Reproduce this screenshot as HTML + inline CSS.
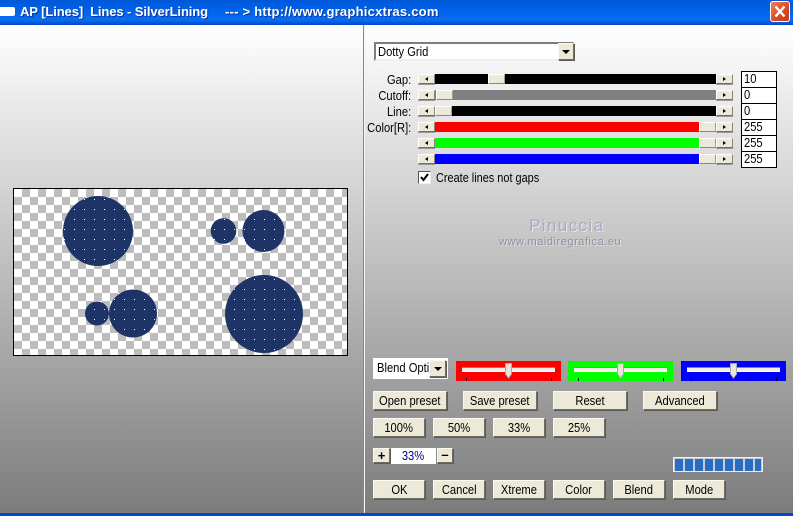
<!DOCTYPE html>
<html><head><meta charset="utf-8">
<style>
html,body{margin:0;padding:0}
body{width:793px;height:516px;overflow:hidden;position:relative;font-family:"Liberation Sans",sans-serif;font-size:13px;color:#000;background:#888}
div{position:absolute;box-sizing:border-box}
.t{display:inline-block;transform:scaleX(.86);white-space:nowrap}
.tl{display:inline-block;transform:scaleX(.86);transform-origin:left center;white-space:nowrap}
.tr2{display:inline-block;transform:scaleX(.86);transform-origin:right center;white-space:nowrap}
.bg{left:0;top:25px;width:793px;height:488px;background:linear-gradient(#fff 0,#7c7c7c 100%)}
.btn{background:#ece9d8;border:1px solid;border-color:#fbfaf4 #716f64 #716f64 #fbfaf4;box-shadow:1px 1px 0 #5c5b53;text-align:center;line-height:17px;white-space:nowrap}
.sb{background:#ece9d8;border:1px solid;border-color:#fff #8a887c #716f64 #fff;box-shadow:0 1px 0 #999;height:10px;width:17px}
.th{background:#ece9d8;border:1px solid;border-color:#fff #a09e90 #8a887c #fff;height:10px;width:17px}
.al{width:0;height:0;border-top:2px solid transparent;border-bottom:2px solid transparent;top:2px;left:6px}
.l{border-right:3px solid #000}
.r{border-left:3px solid #000}
.tr{left:435px;width:281px;height:10px}
.lb{right:382px;text-align:right;line-height:12px;white-space:nowrap}
.in{left:741px;width:36px;height:17px;background:#fff;border:1px solid #000;line-height:14px;padding-left:2px;font-size:13px}
.sl{top:361px;width:105px;height:20px}
.rail{left:6px;top:6px;width:93px;height:5px;background:#f2f0e6;border-top:1px solid #8a8a80;border-bottom:1px solid #fff}
.tk{top:17px;width:1px;height:3px;background:#000}
.cell{top:1px;width:8px;height:12px;background:#2a6bc4}
</style></head><body>
<div style="left:0;top:0;width:793px;height:25px;background:linear-gradient(#0058d8 0,#0060e6 35%,#0a6cf4 80%,#0048c8 100%)"></div>
<div style="left:0;top:7px;width:15px;height:9px;background:#fff;border-radius:0 2px 2px 0"></div>
<div style="left:20px;top:3px;height:18px;line-height:18px;color:#fff;font-weight:bold;font-size:13px;white-space:pre;text-shadow:1px 1px 0 #0a3aa0;letter-spacing:-.1px">AP [Lines]  Lines - SilverLining</div>
<div style="left:225px;top:3px;height:18px;line-height:18px;color:#fff;font-weight:bold;font-size:13px;white-space:pre;text-shadow:1px 1px 0 #0a3aa0;letter-spacing:.24px">--- &gt; http://www.graphicxtras.com</div>
<div style="left:770px;top:1px;width:20px;height:21px;background:linear-gradient(135deg,#f0805c,#d84a20 60%,#c03a18);border:1px solid #fff;border-radius:3px">
<svg width="18" height="19" style="position:absolute;left:0;top:0"><path d="M4.500 4.500L13.500 14.500M13.500 4.500L4.500 14.500" stroke="#fff" stroke-width="2.400" fill="none"/></svg></div>

<div class="bg"></div>
<div style="left:0;top:513px;width:793px;height:3px;background:#0048d0"></div>
<div style="left:363px;top:25px;width:1px;height:488px;background:#888"></div>
<div style="left:364px;top:25px;width:1px;height:488px;background:#f4f4f4"></div>

<!-- canvas -->
<svg width="336" height="169" viewBox="13 188 336 169" style="position:absolute;left:13px;top:188px">
<defs>
<pattern id="ck" x="14" y="189" width="16" height="16" patternUnits="userSpaceOnUse">
<rect width="16" height="16" fill="#fff"/><rect x="8" width="8" height="8" fill="#bdbdbd"/><rect y="8" width="8" height="8" fill="#bdbdbd"/>
</pattern>
<pattern id="dt" x="4" y="9" width="10" height="10" patternUnits="userSpaceOnUse">
<rect width="10" height="10" fill="#1f3466"/><rect width="1" height="1" fill="#fff"/>
</pattern>
</defs>
<rect x="13.500" y="188.500" width="334" height="167" fill="url(#ck)" stroke="#000"/>
<g fill="url(#dt)">
<circle cx="98" cy="231" r="35"/>
<circle cx="223.500" cy="231" r="12.800"/>
<circle cx="263.500" cy="231" r="21"/>
<circle cx="264" cy="314" r="39"/>
<circle cx="97" cy="313.500" r="12"/>
<circle cx="133" cy="313.500" r="24"/>
</g>
</svg>

<!-- combo -->
<div style="left:374px;top:42px;width:200px;height:19px;background:#fff;border:2px solid;border-color:#807e72 #eee #eee #807e72;line-height:15px;padding-left:2px"><span class="tl">Dotty Grid</span></div>
<div class="btn" style="left:558px;top:43px;width:16px;height:17px"><div style="left:3px;top:6px;width:0;height:0;border-left:4px solid transparent;border-right:4px solid transparent;border-top:4px solid #000"></div></div>

<!-- labels -->
<div class="lb" style="top:74px"><span class="tr2">Gap:</span></div>
<div class="lb" style="top:90px"><span class="tr2">Cutoff:</span></div>
<div class="lb" style="top:106px"><span class="tr2">Line:</span></div>
<div class="lb" style="top:122px"><span class="tr2">Color[R]:</span></div>

<!-- sliders -->
<div class="tr" style="top:74px;background:#000"></div>
<div class="tr" style="top:90px;background:#808080"></div>
<div class="tr" style="top:106px;background:#000"></div>
<div class="tr" style="top:122px;background:#f00"></div>
<div class="tr" style="top:138px;background:#0f0"></div>
<div class="tr" style="top:154px;background:#00f"></div>

<div class="sb" style="left:418px;top:74px"><div class="al l"></div></div>
<div class="sb" style="left:418px;top:90px"><div class="al l"></div></div>
<div class="sb" style="left:418px;top:106px"><div class="al l"></div></div>
<div class="sb" style="left:418px;top:122px"><div class="al l"></div></div>
<div class="sb" style="left:418px;top:138px"><div class="al l"></div></div>
<div class="sb" style="left:418px;top:154px"><div class="al l"></div></div>

<div class="sb" style="left:716px;top:74px"><div class="al r"></div></div>
<div class="sb" style="left:716px;top:90px"><div class="al r"></div></div>
<div class="sb" style="left:716px;top:106px"><div class="al r"></div></div>
<div class="sb" style="left:716px;top:122px"><div class="al r"></div></div>
<div class="sb" style="left:716px;top:138px"><div class="al r"></div></div>
<div class="sb" style="left:716px;top:154px"><div class="al r"></div></div>

<div class="th" style="left:488px;top:74px"></div>
<div class="th" style="left:436px;top:90px"></div>
<div class="th" style="left:435px;top:106px"></div>
<div class="th" style="left:699px;top:122px"></div>
<div class="th" style="left:699px;top:138px"></div>
<div class="th" style="left:699px;top:154px"></div>

<div class="in" style="top:71px"><span class="tl">10</span></div>
<div class="in" style="top:87px"><span class="tl">0</span></div>
<div class="in" style="top:103px"><span class="tl">0</span></div>
<div class="in" style="top:119px"><span class="tl">255</span></div>
<div class="in" style="top:135px"><span class="tl">255</span></div>
<div class="in" style="top:151px"><span class="tl">255</span></div>

<!-- checkbox -->
<div style="left:418px;top:171px;width:13px;height:13px;background:#fff;border:1px solid;border-color:#555 #eee #eee #555">
<svg width="11" height="11" style="position:absolute;left:0;top:0"><path d="M2 5L4.500 8L9 2" stroke="#000" stroke-width="2" fill="none"/></svg></div>
<div style="left:436px;top:171px;line-height:14px;white-space:nowrap"><span class="tl" style="transform:scaleX(.84)">Create lines not gaps</span></div>

<!-- watermark -->
<div style="left:529px;top:216px;font-size:17px;line-height:20px;color:#a8aac4;letter-spacing:1.4px;text-shadow:1px 1px 0 #e8e8e8;white-space:nowrap">Pinuccia</div>
<div style="left:499px;top:236px;font-size:11px;line-height:13px;color:#9090a0;letter-spacing:.55px;text-shadow:1px 1px 0 #e0e0e0;white-space:nowrap">www.maidiregrafica.eu</div>

<!-- blend -->
<div style="left:373px;top:358px;width:75px;height:21px;background:#fff;overflow:hidden;line-height:20px;padding-left:4px;white-space:nowrap"><span class="tl">Blend Option</span></div>
<div class="btn" style="left:429px;top:360px;width:17px;height:17px"><div style="left:4px;top:6px;width:0;height:0;border-left:4px solid transparent;border-right:4px solid transparent;border-top:4px solid #000"></div></div>

<div class="sl" style="left:456px;background:#f00"><div class="rail"></div><svg width="9" height="16" style="position:absolute;left:48px;top:2px"><path d="M1.500 .5H7.500V11L4.500 15L1.500 11Z" fill="#e8e6da" stroke="#aaa"/></svg><div class="tk" style="left:10px"></div><div class="tk" style="left:95px"></div></div>
<div class="sl" style="left:568px;background:#0f0"><div class="rail"></div><svg width="9" height="16" style="position:absolute;left:48px;top:2px"><path d="M1.500 .5H7.500V11L4.500 15L1.500 11Z" fill="#e8e6da" stroke="#aaa"/></svg><div class="tk" style="left:10px"></div><div class="tk" style="left:95px"></div></div>
<div class="sl" style="left:681px;background:#00f"><div class="rail"></div><svg width="9" height="16" style="position:absolute;left:48px;top:2px"><path d="M1.500 .5H7.500V11L4.500 15L1.500 11Z" fill="#e8e6da" stroke="#aaa"/></svg><div class="tk" style="left:10px"></div><div class="tk" style="left:95px"></div></div>

<!-- buttons -->
<div class="btn" style="left:373px;top:391px;width:74px;height:19px"><span class="t">Open preset</span></div>
<div class="btn" style="left:463px;top:391px;width:74px;height:19px"><span class="t">Save preset</span></div>
<div class="btn" style="left:553px;top:391px;width:74px;height:19px"><span class="t">Reset</span></div>
<div class="btn" style="left:643px;top:391px;width:74px;height:19px"><span class="t">Advanced</span></div>

<div class="btn" style="left:373px;top:418px;width:52px;height:19px"><span class="t">100%</span></div>
<div class="btn" style="left:433px;top:418px;width:52px;height:19px"><span class="t">50%</span></div>
<div class="btn" style="left:493px;top:418px;width:52px;height:19px"><span class="t">33%</span></div>
<div class="btn" style="left:553px;top:418px;width:52px;height:19px"><span class="t">25%</span></div>

<div class="btn" style="left:373px;top:448px;width:17px;height:15px;line-height:13px;font-weight:bold">+</div>
<div style="left:391px;top:448px;width:45px;height:16px;background:#fff;color:#000080;text-align:center;line-height:15px"><span class="t">33%</span></div>
<div class="btn" style="left:437px;top:448px;width:16px;height:15px;line-height:12px;font-weight:bold">&#8211;</div>

<div class="btn" style="left:373px;top:480px;width:52px;height:19px"><span class="t">OK</span></div>
<div class="btn" style="left:433px;top:480px;width:52px;height:19px"><span class="t">Cancel</span></div>
<div class="btn" style="left:493px;top:480px;width:52px;height:19px"><span class="t">Xtreme</span></div>
<div class="btn" style="left:553px;top:480px;width:52px;height:19px"><span class="t">Color</span></div>
<div class="btn" style="left:613px;top:480px;width:52px;height:19px"><span class="t">Blend</span></div>
<div class="btn" style="left:673px;top:480px;width:52px;height:19px"><span class="t">Mode</span></div>

<!-- progress -->
<div style="left:673px;top:457px;width:90px;height:15px;background:#c4ccd8;border:1px solid #f0eee4">
<div class="cell" style="left:1px"></div>
<div class="cell" style="left:11px"></div>
<div class="cell" style="left:21px"></div>
<div class="cell" style="left:31px"></div>
<div class="cell" style="left:41px"></div>
<div class="cell" style="left:51px"></div>
<div class="cell" style="left:61px"></div>
<div class="cell" style="left:71px"></div>
<div class="cell" style="left:81px;width:6px"></div>
</div>
</body></html>
